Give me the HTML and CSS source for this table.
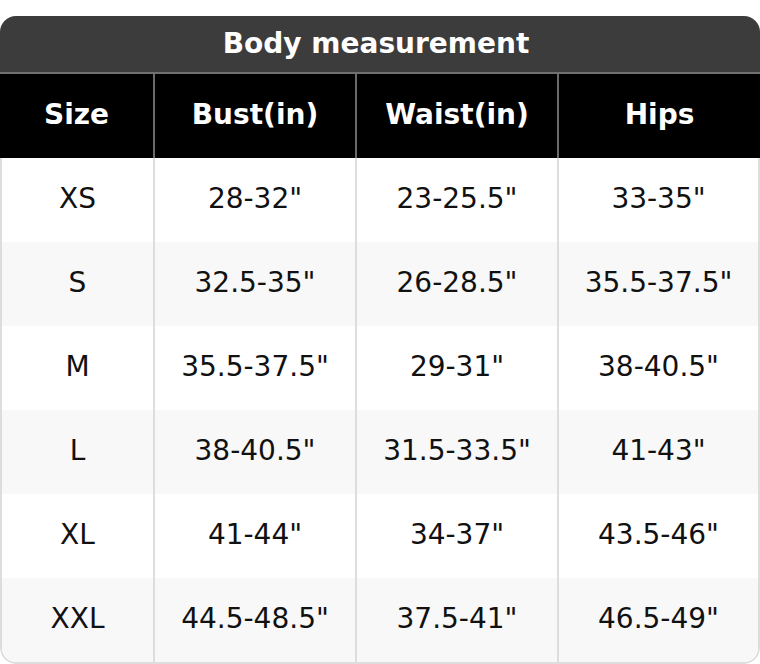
FILE: index.html
```html
<!DOCTYPE html>
<html>
<head>
<meta charset="utf-8">
<link rel="stylesheet" href="styles.css">
</head>
<body>
<div class="chart">
  <div class="title">Body measurement</div>
  <div class="row head">
    <div class="cell">Size</div>
    <div class="cell">Bust(in)</div>
    <div class="cell">Waist(in)</div>
    <div class="cell">Hips</div>
  </div>
  <div class="body">
    <div class="row">
      <div class="cell">XS</div><div class="cell">28-32"</div><div class="cell">23-25.5"</div><div class="cell">33-35"</div>
    </div>
    <div class="row alt">
      <div class="cell">S</div><div class="cell">32.5-35"</div><div class="cell">26-28.5"</div><div class="cell">35.5-37.5"</div>
    </div>
    <div class="row">
      <div class="cell">M</div><div class="cell">35.5-37.5"</div><div class="cell">29-31"</div><div class="cell">38-40.5"</div>
    </div>
    <div class="row alt">
      <div class="cell">L</div><div class="cell">38-40.5"</div><div class="cell">31.5-33.5"</div><div class="cell">41-43"</div>
    </div>
    <div class="row">
      <div class="cell">XL</div><div class="cell">41-44"</div><div class="cell">34-37"</div><div class="cell">43.5-46"</div>
    </div>
    <div class="row alt">
      <div class="cell">XXL</div><div class="cell">44.5-48.5"</div><div class="cell">37.5-41"</div><div class="cell">46.5-49"</div>
    </div>
  </div>
</div>
</body>
</html>
```

FILE: styles.css
```css
html, body {
  margin: 0;
  padding: 0;
  background: #ffffff;
}
body {
  padding-top: 16px;
  font-family: "DejaVu Sans", Verdana, sans-serif;
  font-size: 28px;
  color: #111111;
}
.chart {
  width: 760px;
  border-radius: 16px;
  overflow: hidden;
  background: #ffffff;
}
.title {
  height: 58px;
  box-sizing: border-box;
  padding: 0 8px 2px 0;
  display: flex;
  align-items: center;
  justify-content: center;
  background: #3c3c3c;
  color: #ffffff;
  font-weight: bold;
  font-size: 28px;
  border-bottom: 2px solid #707070;
}
.row {
  display: grid;
  grid-template-columns: 153px 202px 202px 203px;
  height: 84px;
}
.cell {
  display: flex;
  align-items: center;
  justify-content: center;
  box-sizing: border-box;
  padding-bottom: 3px;
}
.head {
  background: #000000;
  color: #ffffff;
  font-weight: bold;
}
.head .cell + .cell {
  border-left: 2px solid #6a6a6a;
}
.body {
  border: 2px solid #dddddd;
  border-top: none;
  border-radius: 0 0 16px 16px;
  overflow: hidden;
}
.body .row {
  grid-template-columns: 151px 202px 202px 201px;
  background: #ffffff;
}
.body .row.alt {
  background: #f8f8f8;
}
.body .cell + .cell {
  border-left: 2px solid #dddddd;
}
```
